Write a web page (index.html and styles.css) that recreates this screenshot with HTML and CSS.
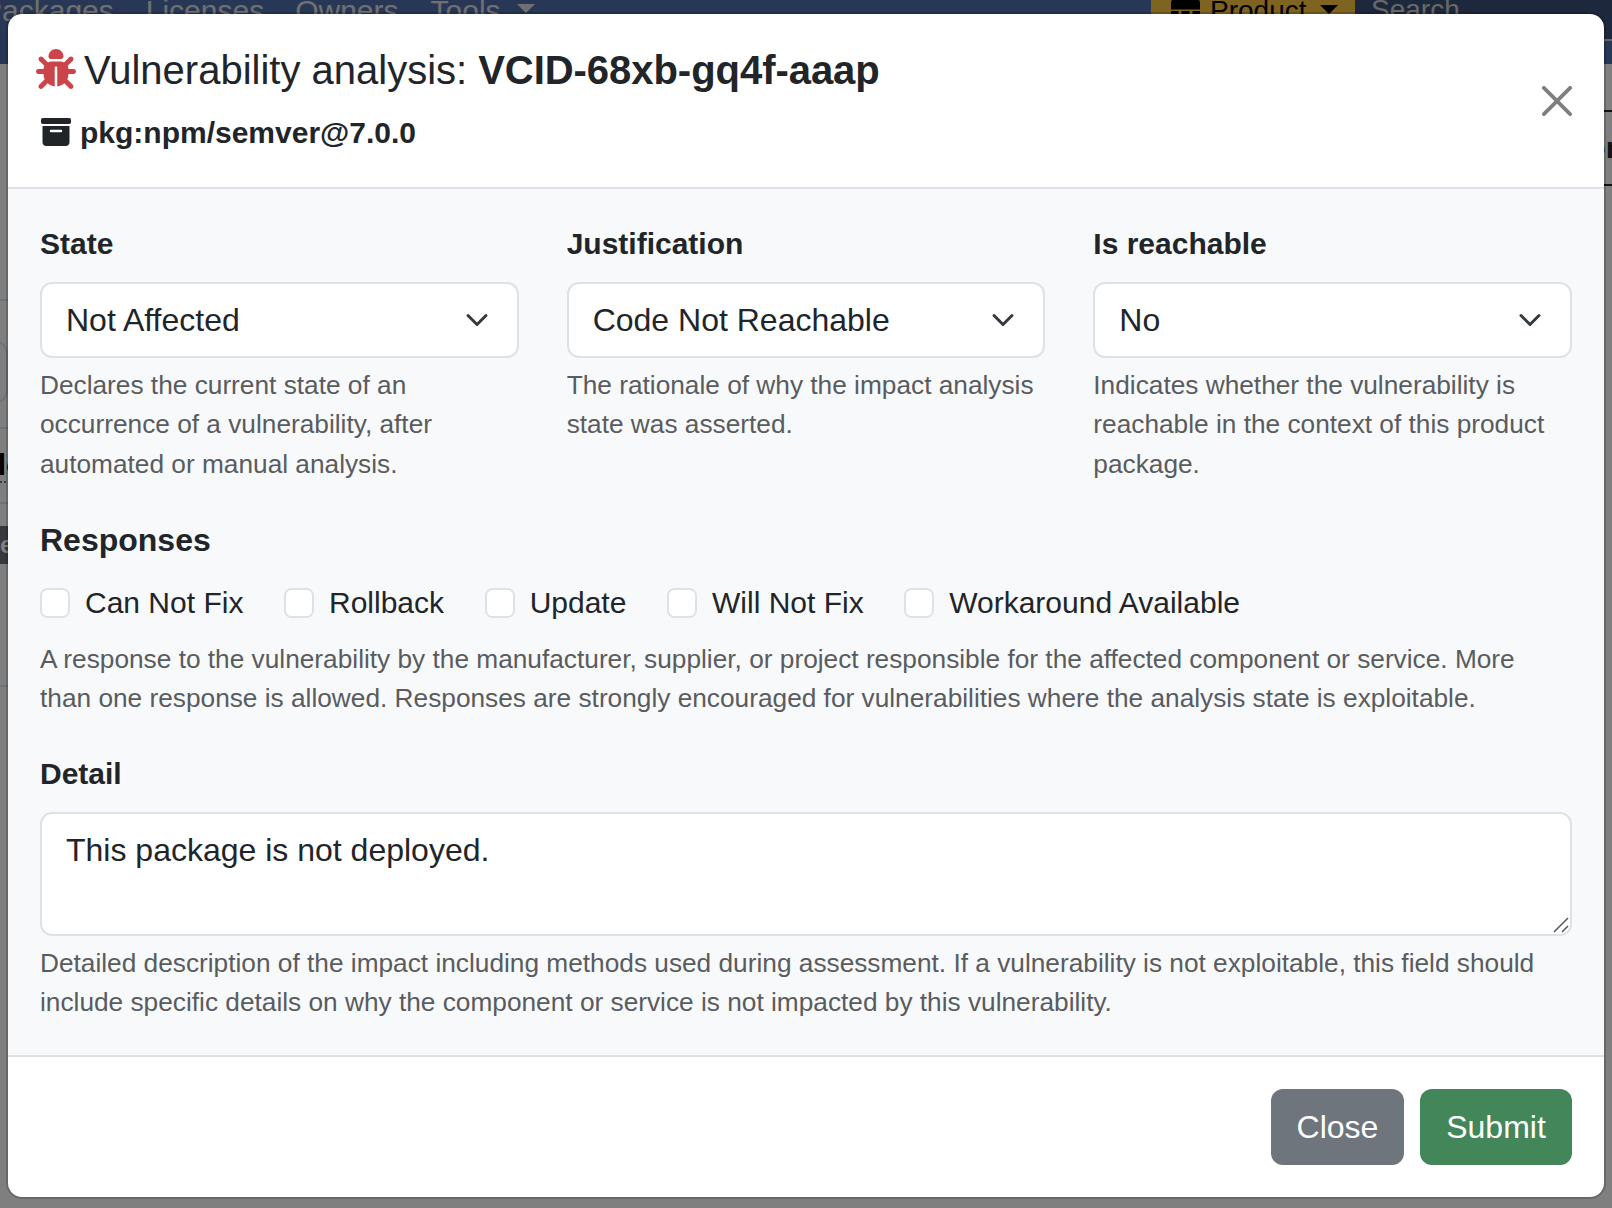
FILE: index.html
```html
<!DOCTYPE html>
<html lang="en">
<head>
<meta charset="utf-8">
<title>Vulnerability analysis</title>
<link rel="stylesheet" href="styles.css">
</head>
<body>
<div class="page">
  <nav class="navbar">
    <div class="nav-links">
      <span>Packages</span><span class="licenses">Licenses</span><span class="owners">Owners</span><span class="tools">Tools<i class="caret"></i></span>
    </div>
    <div class="search-group">
      <div class="scope"><svg class="toolbox" width="29" height="28" viewBox="0 0 29 28"><path d="M8 5V2a2 2 0 0 1 2-2h9a2 2 0 0 1 2 2v3h4a4 4 0 0 1 4 4v6.500H0V9a4 4 0 0 1 4-4z"/><path d="M0 17h7.500v3h3v-3h8v3h3v-3H29v8a3 3 0 0 1-3 3H3a3 3 0 0 1-3-3z"/></svg><span class="scope-text">Product</span><i class="caret"></i></div>
      <div class="search">Search</div>
    </div>
  </nav>
  <main class="content">
    <div class="left-edge">
      <div class="row filters"></div>
      <div class="row inputs"><span class="input-end"></span></div>
      <div class="row name"><b>alo</b></div>
      <div class="row tag"><span class="badge">te</span></div>
    </div>
    <div class="right-edge"><div class="tab">ion</div></div>
  </main>
</div>
<div class="backdrop">
  <section class="modal">
    <header class="modal-header">
      <div>
        <h1 class="title"><svg class="bug" viewBox="0 0 512 512"><path d="M256 0c53 0 96 43 96 96v3.600c0 15.700-12.700 28.400-28.400 28.400H188.400c-15.700 0-28.400-12.700-28.400-28.400V96c0-53 43-96 96-96zM41.400 105.400c12.500-12.500 32.800-12.500 45.300 0l64 64c.7.700 1.300 1.400 1.900 2.100 14.200-7.300 30.400-11.400 47.500-11.400h112c17.100 0 33.200 4.100 47.500 11.400.6-.7 1.200-1.400 1.900-2.100l64-64c12.500-12.500 32.800-12.500 45.300 0s12.500 32.800 0 45.300l-64 64c-.7.700-1.400 1.300-2.100 1.900 6.200 12 10.100 25.300 11.100 39.500H480c17.700 0 32 14.300 32 32s-14.300 32-32 32h-64c0 24.600-5.500 47.800-15.400 68.600 2.200 1.300 4.200 2.900 6 4.800l64 64c12.500 12.500 12.500 32.800 0 45.300s-32.800 12.500-45.300 0l-63.100-63.100c-24.500 21.800-55.800 36.200-90.300 39.600V240c0-8.800-7.200-16-16-16s-16 7.200-16 16v239.200c-34.500-3.400-65.800-17.800-90.300-39.600l-63 63c-12.500 12.500-32.800 12.500-45.300 0s-12.500-32.800 0-45.300l64-64c1.900-1.900 3.900-3.400 6-4.800C101.500 367.800 96 344.600 96 320H32c-17.700 0-32-14.300-32-32s14.300-32 32-32h64.300c1.100-14.100 5-27.500 11.100-39.500-.7-.6-1.400-1.200-2.100-1.900l-64-64c-12.500-12.500-12.500-32.800 0-45.300z"/></svg><span>Vulnerability analysis:</span> <b>VCID-68xb-gq4f-aaap</b></h1>
        <div class="package"><svg class="archive" width="30" height="28" viewBox="0 0 30 28"><rect width="30" height="6" rx="1.800"/><path fill-rule="evenodd" d="M1.500 8h27v16a4 4 0 0 1-4 4h-19a4 4 0 0 1-4-4zM10 11.800a1 1 0 0 0 0 2.400h10a1 1 0 0 0 0-2.400z"/></svg><b>pkg:npm/semver@7.0.0</b></div>
      </div>
      <svg class="dismiss" width="30" height="30" viewBox="0 0 16 16"><path d="M.293.293a1 1 0 0 1 1.414 0L8 6.586 14.293.293a1 1 0 1 1 1.414 1.414L9.414 8l6.293 6.293a1 1 0 0 1-1.414 1.414L8 9.414l-6.293 6.293a1 1 0 0 1-1.414-1.414L6.586 8 .293 1.707a1 1 0 0 1 0-1.414z"/></svg>
    </header>
    <div class="modal-body">
      <div class="columns">
        <div><label class="label">State</label>
          <div class="select"><span>Not Affected</span><svg class="chevron" viewBox="0 0 16 16"><path d="m2 5 6 6 6-6"/></svg></div>
          <p class="help">Declares the current state of an<br>occurrence of a vulnerability, after<br>automated or manual analysis.</p></div>
        <div><label class="label">Justification</label>
          <div class="select"><span>Code Not Reachable</span><svg class="chevron" viewBox="0 0 16 16"><path d="m2 5 6 6 6-6"/></svg></div>
          <p class="help">The rationale of why the impact analysis<br>state was asserted.</p></div>
        <div><label class="label">Is reachable</label>
          <div class="select"><span>No</span><svg class="chevron" viewBox="0 0 16 16"><path d="m2 5 6 6 6-6"/></svg></div>
          <p class="help">Indicates whether the vulnerability is<br>reachable in the context of this product<br>package.</p></div>
      </div>
      <h2 class="responses">Responses</h2>
      <div class="checks">
        <label class="check"><i class="box"></i>Can Not Fix</label>
        <label class="check"><i class="box"></i>Rollback</label>
        <label class="check"><i class="box"></i>Update</label>
        <label class="check"><i class="box"></i>Will Not Fix</label>
        <label class="check"><i class="box"></i>Workaround Available</label>
      </div>
      <p class="help">A response to the vulnerability by the manufacturer, supplier, or project responsible for the affected component or service. More<br>than one response is allowed. Responses are strongly encouraged for vulnerabilities where the analysis state is exploitable.</p>
      <label class="label detail-label">Detail</label>
      <div class="textarea"><span>This package is not deployed.</span><svg class="grip" width="16" height="16" viewBox="0 0 16 16"><path d="M1 15 15 1M9 15l6-6"/></svg></div>
      <p class="help">Detailed description of the impact including methods used during assessment. If a vulnerability is not exploitable, this field should<br>include specific details on why the component or service is not impacted by this vulnerability.</p>
    </div>
    <footer class="modal-footer">
      <button class="btn close">Close</button>
      <button class="btn submit">Submit</button>
    </footer>
  </section>
</div>
</body>
</html>
```
FILE: styles.css
```css
* { box-sizing: border-box; }
body {
  margin: 0;
  width: 1612px;
  height: 1208px;
  overflow: hidden;
  position: relative;
  font: 30px/45px "Liberation Sans", Arial, sans-serif;
  color: #212529;
  background: #fff;
}
h1, h2, p { margin: 0; }

.page { height: 1208px; overflow: hidden; }
.navbar {
  height: 64px;
  display: flex;
  justify-content: space-between;
  background: #506eaa;
  color: #fff;
}
.nav-links { display: flex; margin: -12px 0 0 -18px; color: #e0e0e0; white-space: nowrap; }
.licenses { margin-left: 32px; }
.owners { margin-left: 31px; }
.tools { margin-left: 32px; display: flex; }
.caret {
  display: inline-block;
  width: 0;
  height: 0;
  border: 9px solid transparent;
  border-top-color: currentColor;
  border-bottom: 0;
  margin: 16px 0 0 16px;
}
.search-group { display: flex; height: 41px; width: 461px; font-size: 28px; line-height: 42px; }
.scope { width: 204px; background: #fec843; color: #000; display: flex; padding-left: 20px; }
.scope-text { margin: -10px 0 0 10px; }
.scope .caret { margin: 5px 0 0 13px; }
.toolbox { margin-top: -6px; }
.search { flex: 1; background: #3c5078; color: #d0d0d0; border-bottom: 2px solid #ccc; padding-left: 16px; line-height: 20px; }

.content { display: flex; justify-content: space-between; height: 1144px; overflow: hidden; }
.left-edge { width: 8px; overflow: hidden; }
.row { border-bottom: 2px solid #dee2e6; overflow: hidden; }
.filters { height: 237px; }
.inputs { height: 128px; padding-top: 40px; }
.input-end { display: block; margin-left: -20px; width: 28px; height: 62px; border: 2px solid #dee2e6; border-radius: 12px; }
.name { height: 75px; padding-top: 13px; color: #000; }
.name b { display: block; width: 44px; height: 41px; margin-left: -19px; border-bottom: 2px dotted #6c757d; }
.tag { height: 183px; padding-top: 22px; }
.badge { display: block; width: 8px; height: 38px; overflow: hidden; background: #6c757d; color: #fff; font: bold 24px/38px "Liberation Sans", sans-serif; text-indent: -8px; }
.right-edge { width: 8px; padding-top: 46px; }
.tab { height: 76px; border-top: 2px solid #212529; border-bottom: 2px solid #212529; font-weight: 700; line-height: 72px; text-indent: -25px; overflow: hidden; color: #212529; }

.backdrop {
  position: absolute;
  inset: 0;
  padding: 12px 6px 9px;
  background: rgba(0, 0, 0, .5);
}
.modal {
  height: 1187px;
  display: flex;
  flex-direction: column;
  background: #fff;
  background-clip: padding-box;
  border: 2px solid rgba(0, 0, 0, .175);
  border-radius: 16px;
}
.modal-header {
  height: 175px;
  display: flex;
  justify-content: space-between;
  padding: 26px 32px 0 28px;
  border-bottom: 2px solid #dee2e6;
}
.title { display: flex; font-size: 40px; line-height: 60px; font-weight: 400; white-space: pre; }
.title b { margin-left: 11px; letter-spacing: -.04px; }
.bug { width: 40px; height: 42px; margin: 8px 8px 0 0; fill: #cb444a; }
.package { display: flex; padding: 10px 0 0 5px; }
.archive { margin: 8px 9px 0 0; fill: #212529; }
.dismiss { margin-top: 46px; opacity: .5; }

.modal-body { height: 866px; padding: 32px 32px 0; background: #f8f9fb; }
.columns { display: grid; grid-template-columns: repeat(3, 1fr); gap: 48px; height: 293px; }
.label { display: block; font-weight: 700; padding-bottom: 16px; }
.select {
  height: 76px;
  display: flex;
  align-items: center;
  justify-content: space-between;
  padding: 0 24px;
  font-size: 32px;
  line-height: 48px;
  background: #fff;
  border: 2px solid #dee2e6;
  border-radius: 12px;
}
.chevron { width: 32px; height: 24px; fill: none; stroke: #343a40; stroke-width: 2; stroke-linecap: round; stroke-linejoin: round; }
.help { padding-top: 8px; font-size: 26.25px; line-height: 39.375px; color: #595c5f; white-space: nowrap; }
.responses { font-size: 32px; line-height: 48px; font-weight: 700; padding-top: 2px; }
.checks { display: flex; gap: 40.600px; padding: 16px 0 7px; }
.check { display: flex; gap: 15px; }
.box { width: 30px; height: 30px; margin-top: 8px; background: #fff; border: 2px solid #dee2e6; border-radius: 7.500px; }
.detail-label { padding-top: 32px; }
.textarea {
  height: 124px;
  display: flex;
  justify-content: space-between;
  align-items: flex-end;
  padding: 0 1px 1px 24px;
  font-size: 32px;
  line-height: 48px;
  background: #fff;
  border: 2px solid #dee2e6;
  border-radius: 12px;
}
.textarea span { align-self: flex-start; margin-top: 12px; }
.grip { fill: none; stroke: #555; stroke-width: 1.500; }

.modal-footer { display: flex; justify-content: flex-end; gap: 16px; padding: 32px; border-top: 2px solid #dee2e6; }
.btn { height: 76px; padding: 0; border: 0; border-radius: 12px; color: #fff; font: 32px/48px "Liberation Sans", Arial, sans-serif; }
.close { width: 133px; background: #6e757d; }
.submit { width: 152px; background: #438659; }
```
